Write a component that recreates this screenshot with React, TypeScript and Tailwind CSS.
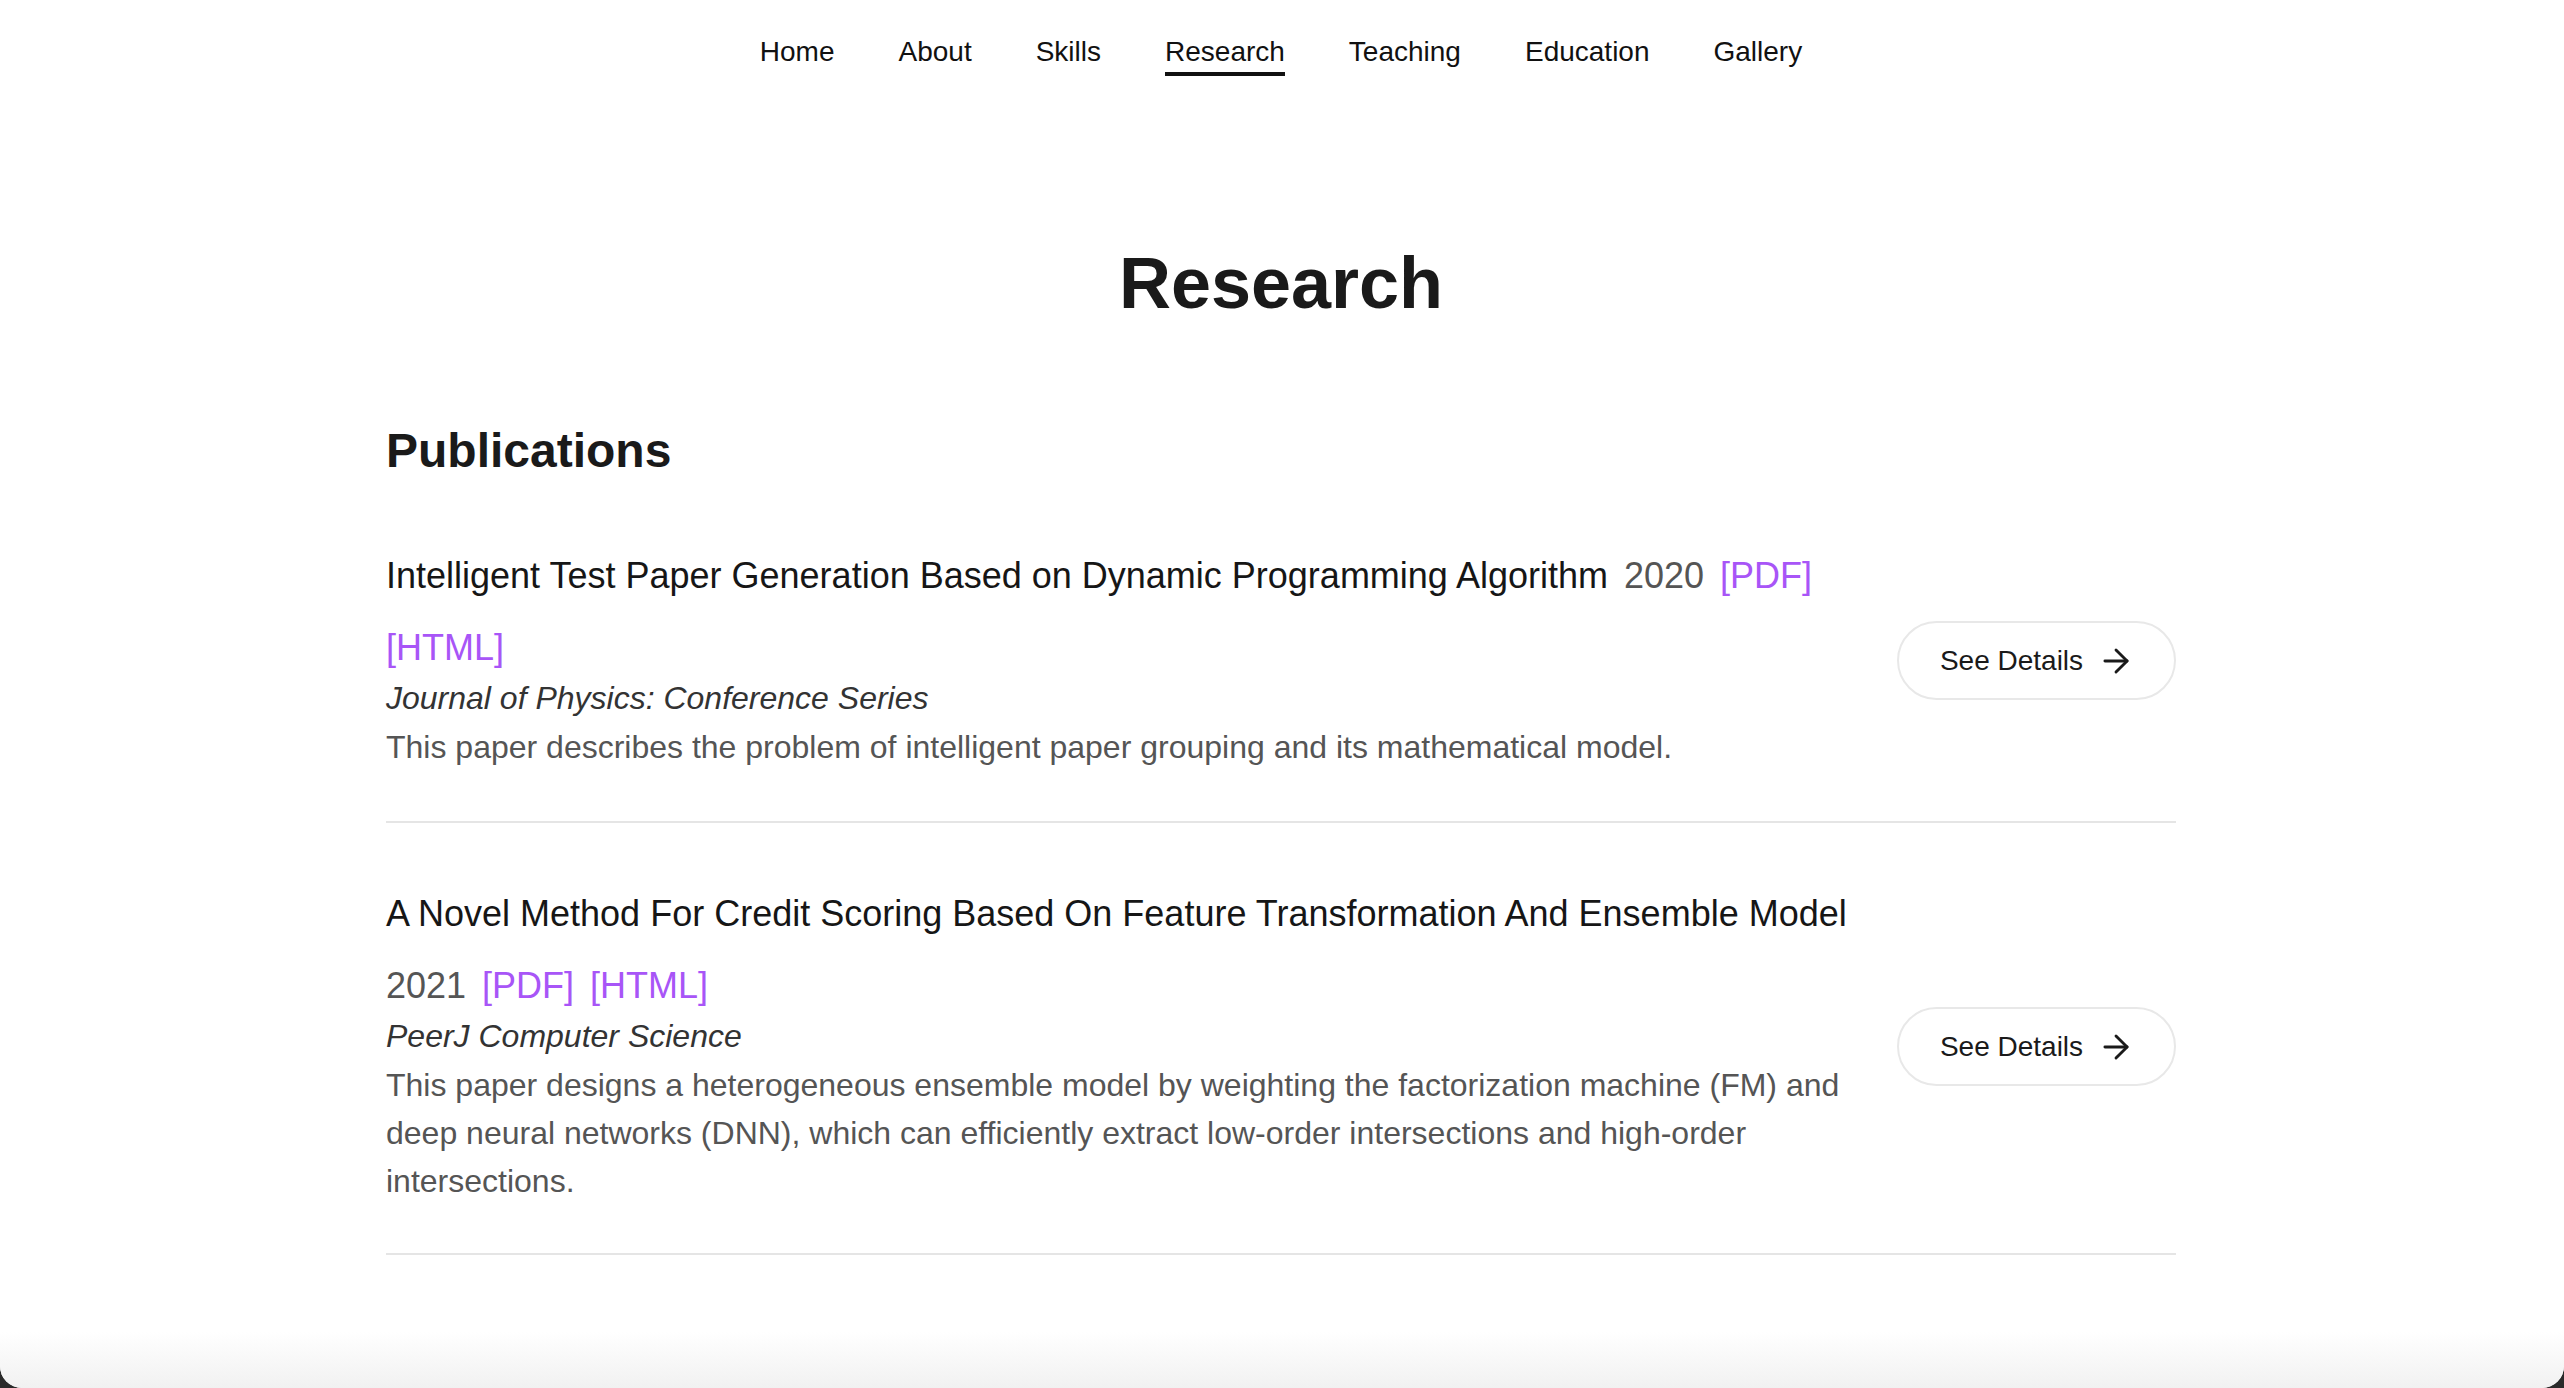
import { ArrowRight } from "lucide-react";

type Publication = {
  title: string;
  year: number;
  journal: string;
  description: string;
};

const navItems = ["Home", "About", "Skills", "Research", "Teaching", "Education", "Gallery"];

const publications: Publication[] = [
  {
    title: "Intelligent Test Paper Generation Based on Dynamic Programming Algorithm",
    year: 2020,
    journal: "Journal of Physics: Conference Series",
    description: "This paper describes the problem of intelligent paper grouping and its mathematical model.",
  },
  {
    title: "A Novel Method For Credit Scoring Based On Feature Transformation And Ensemble Model",
    year: 2021,
    journal: "PeerJ Computer Science",
    description:
      "This paper designs a heterogeneous ensemble model by weighting the factorization machine (FM) and deep neural networks (DNN), which can efficiently extract low-order intersections and high-order intersections.",
  },
];

function NavBar() {
  return (
    <nav className="flex justify-center gap-16 pt-[36px] pr-[2px]">
      {navItems.map((item) => (
        <a
          key={item}
          href="#"
          className={
            item === "Research"
              ? "border-b-4 border-[#111] pb-[4px] text-[28px] leading-[32px] text-[#111]"
              : "border-b-4 border-transparent pb-[4px] text-[28px] leading-[32px] text-[#111]"
          }
        >
          {item}
        </a>
      ))}
    </nav>
  );
}

function PublicationItem({ pub, first }: { pub: Publication; first: boolean }) {
  return (
    <li
      className={
        first
          ? "flex items-center gap-8 border-b-2 border-[#e5e5e5] pb-[50px]"
          : "flex items-center gap-8 border-b-2 border-[#e5e5e5] pt-[55px] pb-[48px]"
      }
    >
      <div className="flex-1">
        <div className="flex flex-wrap items-baseline gap-x-4 text-[36px] leading-[72px]">
          <span className="text-[#161616]">{pub.title}</span>
          <span className="text-[#555]">{pub.year}</span>
          <a href="#" className="text-[#a855f7]">
            [PDF]
          </a>
          <a href="#" className="text-[#a855f7]">
            [HTML]
          </a>
        </div>
        <p className="-mt-[10px] text-[32px] italic leading-[48px] text-[#333]">{pub.journal}</p>
        <p className="mt-[1px] text-[32px] leading-[48px] text-[#555]">{pub.description}</p>
      </div>
      <button className="mt-[10px] flex h-[79px] w-[279px] shrink-0 items-center justify-center gap-[14px] rounded-full border-2 border-[#e8e8e8] bg-white pl-[2px] text-[28px] text-[#1a1a1a]">
        See Details
        <ArrowRight className="size-[38px]" strokeWidth={1.8} />
      </button>
    </li>
  );
}

export default function App() {
  return (
    <div className="min-h-screen bg-[#2a2a2a] font-['Liberation_Sans',Arial,sans-serif]">
      <div className="flex h-[1388px] flex-col overflow-hidden rounded-b-[22px] bg-white">
        <NavBar />
        <main className="ml-[386px] w-[1790px]">
          <h1 className="mt-[171px] text-center text-[72px] font-bold leading-[72px] text-[#1a1a1a]">Research</h1>
          <h2 className="mt-[108px] text-[48px] font-bold leading-[48px] text-[#1a1a1a]">Publications</h2>
          <ul className="mt-[65px]">
            {publications.map((pub, i) => (
              <PublicationItem key={pub.title} pub={pub} first={i === 0} />
            ))}
          </ul>
        </main>
        <div className="mt-auto h-[56px] bg-gradient-to-b from-white to-[#f1f1f1]" />
      </div>
    </div>
  );
}
